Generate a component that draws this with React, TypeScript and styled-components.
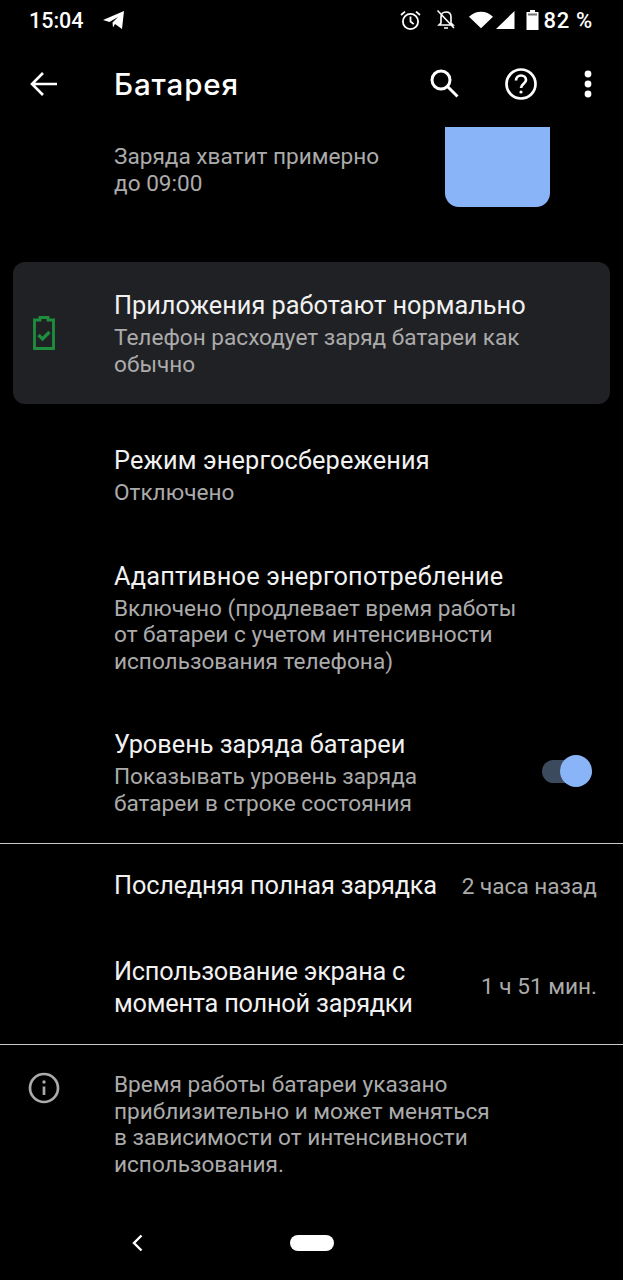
import { createGlobalStyle } from 'styled-components';
import styled from 'styled-components';

const GlobalStyle = createGlobalStyle`
  html, body {
    margin: 0;
    padding: 0;
    background: #000;
  }
  body {
    font-family: Roboto, "Noto Sans", sans-serif;
  }
`;

const Screen = styled.div`
  width: 623px;
  height: 1280px;
  background: #000;
  display: flex;
  flex-direction: column;
  overflow: hidden;
`;

const StatusBar = styled.div`
  height: 40px;
  display: flex;
  align-items: center;
  padding: 0 30px 0 29px;
  color: #fff;
  box-sizing: border-box;
`;

const StatusTime = styled.span`
  font-weight: 500;
  margin-right: 18px;
  font-size: 21.5px;
`;

const StatusRight = styled.div`
  margin-left: auto;
  display: flex;
  align-items: center;
`;

const Battery = styled.span`
  font-weight: 500;
  margin-left: 5px;
  font-size: 22px;
  letter-spacing: 0.7px;
`;

const TopBar = styled.header`
  height: 87px;
  display: flex;
  align-items: center;
  padding: 0 30px 0 29px;
  box-sizing: border-box;
  color: #fff;
`;

const Title = styled.h1`
  margin: 0 0 0 55px;
  font-family: Inter, Roboto, sans-serif;
  font-size: 29.500px;
  font-weight: 500;
  letter-spacing: 0.9px;
  flex: 1;
`;

const TopActions = styled.div`
  display: flex;
  align-items: center;
  gap: 42px;

  svg:last-child {
    margin-left: 3px;
  }
`;

const EstimateRow = styled.section`
  display: flex;
  justify-content: space-between;
  padding: 0 73px 0 114px;
  height: 135px;
`;

const EstimateText = styled.div`
  margin-top: 17px;
  font-size: 22.600px;
  line-height: 26.500px;
  color: #ababab;
`;

const ChargeBlock = styled.div`
  width: 105px;
  height: 80px;
  background: #8ab4f8;
  border-radius: 0 0 14px 14px;
`;

const TipCard = styled.section`
  margin: 0 13px 13px;
  height: 142px;
  flex-shrink: 0;
  box-sizing: border-box;
  background: #202124;
  border-radius: 12px;
  display: flex;
  align-items: center;
  padding-left: 19px;
`;

const CardBody = styled.div`
  margin-left: 58px;
  margin-top: 2px;
`;

const RowTitle = styled.div<{ $track?: number }>`
  font-size: 25.300px;
  line-height: 32px;
  letter-spacing: ${(p) => p.$track ?? 0}px;
  color: #f1f1f1;
  white-space: nowrap;
`;

const TwoLineTitle = styled(RowTitle)`
  margin-top: 4px;
`;

const RowSub = styled.div`
  margin-top: 3px;
  font-size: 22.600px;
  line-height: 26.500px;
  color: #ababab;
  white-space: pre-line;
`;

const SettingRow = styled.div`
  display: flex;
  align-items: center;
  justify-content: space-between;
  padding: 28px 26px 26px 114px;
`;

const ValueRow = styled.div<{ $h: number }>`
  height: ${(p) => p.$h}px;
  flex-shrink: 0;
  display: flex;
  align-items: center;
  justify-content: space-between;
  padding: 0 26px 0 114px;
`;

const Toggle = styled.div`
  position: relative;
  width: 50px;
  height: 23px;
  border-radius: 12px;
  background: #3c4a5e;
  margin: 0 5px 4px 0;
`;

const Thumb = styled.div`
  position: absolute;
  right: 0;
  top: -4.500px;
  width: 32px;
  height: 32px;
  border-radius: 50%;
  background: #8ab4f8;
`;

const Divider = styled.hr`
  margin: 0;
  border: 0;
  height: 1px;
  flex-shrink: 0;
  background: #c8c8c8;
`;

const RowValue = styled.div`
  font-size: 22.600px;
  color: #ababab;
  white-space: nowrap;
`;

const InfoRow = styled.section`
  display: flex;
  padding: 27px 0 0 28px;
  height: 189px;
  flex-shrink: 0;
  box-sizing: border-box;
`;

const InfoText = styled.div`
  margin-left: 54px;
  font-size: 22.600px;
  line-height: 26.600px;
  color: #ababab;
  white-space: pre-line;
`;

const NavBar = styled.nav`
  display: flex;
  align-items: center;
  padding-left: 131px;
  gap: 147px;
`;

const HomePill = styled.div`
  width: 44px;
  height: 16px;
  border-radius: 8px;
  background: #fff;
`;

export default function App() {
  return (
    <Screen>
      <GlobalStyle />
      <StatusBar>
        <StatusTime>15:04</StatusTime>
        <svg width="23" height="20" viewBox="0 0 23 20">
          <path d="M1 10 22 1 20 19 13 14 11 17.500 10.500 12.500 16 7 7.500 12z" fill="#fff" />
        </svg>
        <StatusRight>
          <svg width="21" height="21" viewBox="0 0 21 21" fill="none" stroke="#fff" strokeWidth="1.800">
            <circle cx="10.500" cy="11.500" r="7.600" />
            <path d="M10.500 6.500v5l3.200 2.600M1 5l4-3.400M20 5l-4-3.400" />
          </svg>
          <svg width="20" height="22" viewBox="0 0 20 22" fill="none" stroke="#fff" strokeWidth="1.600" style={{ marginLeft: 15 }}>
            <path d="M5 8c0-3 2-5 5-5s5 2 5 5v6l2 2H3l2-2zM8 19h4M1.500 1.500 18 19" />
          </svg>
          <svg width="24" height="20" viewBox="0 0 26 20" style={{ marginLeft: 13 }}>
            <path d="M0 6.500C3.500 3 8 1 13 1s9.500 2 13 5.500L13 19z" fill="#fff" />
          </svg>
          <svg width="20" height="20" viewBox="0 0 20 20" style={{ marginLeft: 2 }}>
            <path d="M19.500 1V19H1z" fill="#fff" />
          </svg>
          <svg width="13" height="20" viewBox="0 0 13 20" style={{ marginLeft: 11 }}>
            <path d="M4 0h5v2h3.500v18H.500V2H4z" fill="#fff" />
            <rect x="2" y="3.500" width="9" height="2" fill="#000" opacity="0.550" />
          </svg>
          <Battery>82 %</Battery>
        </StatusRight>
      </StatusBar>
      <TopBar>
        <svg width="30" height="30" viewBox="0 0 30 30" fill="none" stroke="#fff" strokeWidth="2.600">
          <path d="M28 15H4M14 4 3 15l11 11" />
        </svg>
        <Title>Батарея</Title>
        <TopActions>
          <svg width="34" height="34" viewBox="0 0 34 34" fill="none" stroke="#fff" strokeWidth="3">
            <circle cx="13" cy="13" r="9" />
            <path d="m19.500 19.500 10 10" />
          </svg>
          <svg width="34" height="34" viewBox="0 0 34 34" fill="none" stroke="#fff" strokeWidth="2.700">
            <circle cx="17" cy="17" r="14.500" />
            <path d="M12 13.500c0-3 2.200-5 5-5s5 2 5 4.500c0 3.500-5 4-5 8" />
            <circle cx="17" cy="25" r="1.600" fill="#fff" stroke="none" />
          </svg>
          <svg width="10" height="30" viewBox="0 0 10 30" fill="#fff">
            <circle cx="5" cy="5" r="3.400" />
            <circle cx="5" cy="15" r="3.400" />
            <circle cx="5" cy="25" r="3.400" />
          </svg>
        </TopActions>
      </TopBar>
      <EstimateRow>
        <EstimateText>
          Заряда хватит примерно
          <br />
          до 09:00
        </EstimateText>
        <ChargeBlock />
      </EstimateRow>
      <TipCard>
        <svg width="24" height="34" viewBox="0 0 24 34" fill="none" stroke="#1e8e3e" strokeWidth="2.800">
          <path d="M8 4V1.500h8V4h5.500v28.500h-19V4z" />
          <path d="m6.500 19 4 4 7-7" strokeWidth="3.200" />
        </svg>
        <CardBody>
          <RowTitle>Приложения работают нормально</RowTitle>
          <RowSub>{'Телефон расходует заряд батареи как\nобычно'}</RowSub>
        </CardBody>
      </TipCard>
      <SettingRow>
        <div>
          <RowTitle $track={0.14}>Режим энергосбережения</RowTitle>
          <RowSub>Отключено</RowSub>
        </div>
      </SettingRow>
      <SettingRow>
        <div>
          <RowTitle $track={0.2}>Адаптивное энергопотребление</RowTitle>
          <RowSub>{'Включено (продлевает время работы\nот батареи с учетом интенсивности\nиспользования телефона)'}</RowSub>
        </div>
      </SettingRow>
      <SettingRow>
        <div>
          <RowTitle>Уровень заряда батареи</RowTitle>
          <RowSub>{'Показывать уровень заряда\nбатареи в строке состояния'}</RowSub>
        </div>
        <Toggle>
          <Thumb />
        </Toggle>
      </SettingRow>
      <Divider />
      <ValueRow $h={84}>
        <RowTitle $track={-0.17}>Последняя полная зарядка</RowTitle>
        <RowValue>2 часа назад</RowValue>
      </ValueRow>
      <ValueRow $h={116}>
        <TwoLineTitle $track={-0.22}>
          Использование экрана с
          <br />
          момента полной зарядки
        </TwoLineTitle>
        <RowValue>1 ч 51 мин.</RowValue>
      </ValueRow>
      <Divider />
      <InfoRow>
        <svg width="32" height="32" viewBox="0 0 32 32" fill="none" stroke="#ababab" strokeWidth="2.700">
          <circle cx="16" cy="16" r="14" />
          <path d="M16 14.500V23" />
          <circle cx="16" cy="10" r="1.700" fill="#ababab" stroke="none" />
        </svg>
        <InfoText>{'Время работы батареи указано\nприблизительно и может меняться\nв зависимости от интенсивности\nиспользования.'}</InfoText>
      </InfoRow>
      <NavBar>
        <svg width="12" height="18" viewBox="0 0 12 18" fill="none" stroke="#fff" strokeWidth="2.400">
          <path d="M10.500 1.500 3 9l7.500 7.500" />
        </svg>
        <HomePill />
      </NavBar>
    </Screen>
  );
}
